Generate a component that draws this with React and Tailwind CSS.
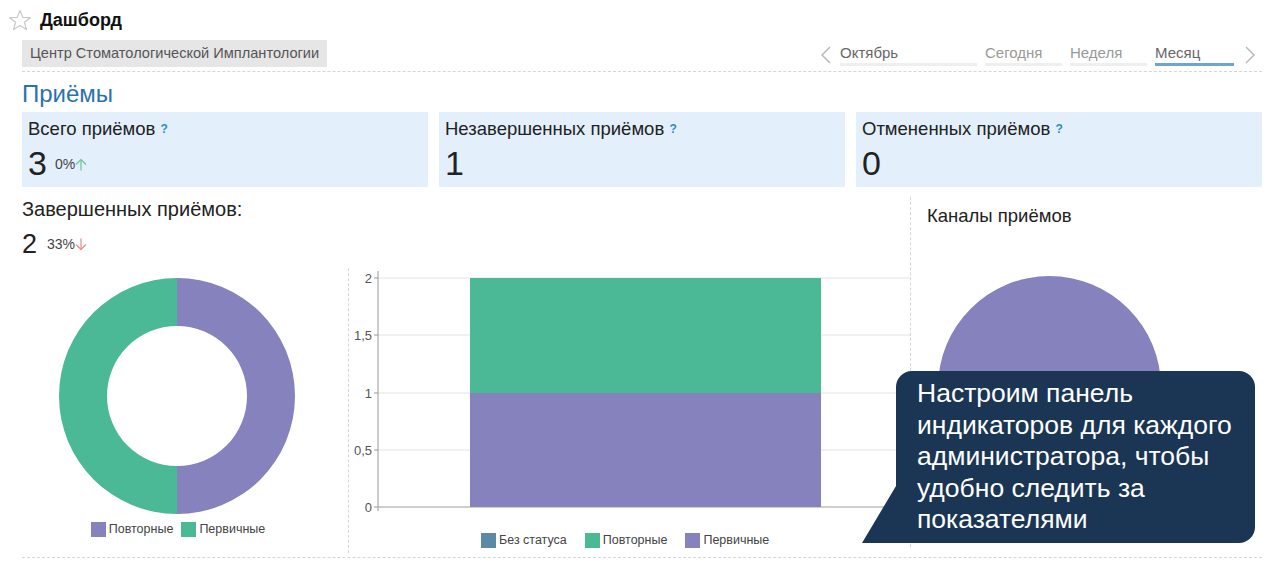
import React from 'react'

const font = { fontFamily: '"Liberation Sans", Arial, sans-serif' }

function Star() {
  return (
    <svg width="24" height="22" viewBox="0 0 24 22" className="shrink-0">
      <polygon
        points="12,1.5 14.8,8.4 22.3,8.7 16.4,13.3 18.5,20.5 12,16.4 5.5,20.5 7.6,13.3 1.7,8.7 9.2,8.4"
        fill="none"
        stroke="#c8c8c8"
        strokeWidth="1.2"
        strokeLinejoin="round"
      />
    </svg>
  )
}

function Chevron({ dir }) {
  return (
    <svg width="12" height="20" viewBox="0 0 12 20">
      <polyline
        points={dir === 'left' ? '10,2 2,10 10,18' : '2,2 10,10 2,18'}
        fill="none"
        stroke="#b5b5b5"
        strokeWidth="1.4"
      />
    </svg>
  )
}

function Arrow({ up }) {
  const c = up ? '#6cc49a' : '#e58a8a'
  return (
    <svg width="12" height="13" viewBox="0 0 12 13" className="inline-block">
      {up ? (
        <g stroke={c} strokeWidth="1.2" fill="none">
          <line x1="6" y1="1.5" x2="6" y2="12.5" />
          <polyline points="1,6.5 6,1.5 11,6.5" />
        </g>
      ) : (
        <g stroke={c} strokeWidth="1.2" fill="none">
          <line x1="6" y1="0.5" x2="6" y2="11.5" />
          <polyline points="1,6.5 6,11.5 11,6.5" />
        </g>
      )}
    </svg>
  )
}

function Stat({ title, value, delta, up }) {
  return (
    <div className="bg-[#e3f0fb] h-[75px] px-[6px] pt-[6px]">
      <div className="text-[18.5px] text-[#222] leading-[22px]">
        {title} <span className="text-[12px] text-[#2a8fc0] font-bold align-top">?</span>
      </div>
      <div className="flex items-end mt-[6px] h-[34px]">
        <span className="text-[34px] leading-[34px] text-[#222]">{value}</span>
        {delta && (
          <span className="ml-[8px] mb-[5px] text-[14px] text-[#444] flex items-center">
            {delta}
            <Arrow up={up} />
          </span>
        )}
      </div>
    </div>
  )
}

function Donut() {
  const cx = 118, cy = 118, R = 118, r = 70
  return (
    <svg width="236" height="236" viewBox="0 0 236 236">
      <path d={`M${cx},${cy - R} A${R},${R} 0 0 1 ${cx},${cy + R} L${cx},${cy + r} A${r},${r} 0 0 0 ${cx},${cy - r} Z`} fill="#8582bd" />
      <path d={`M${cx},${cy - R} A${R},${R} 0 0 0 ${cx},${cy + R} L${cx},${cy + r} A${r},${r} 0 0 1 ${cx},${cy - r} Z`} fill="#4bb896" />
    </svg>
  )
}

function BarChart() {
  const ticks = [
    ['2', 7],
    ['1,5', 64],
    ['1', 122],
    ['0,5', 179],
    ['0', 236],
  ]
  return (
    <svg width="560" height="245" viewBox="0 0 560 245">
      {ticks.map(([l, y]) => (
        <g key={l}>
          <line x1="28" x2="560" y1={y} y2={y} stroke="#e2e2e2" />
          <line x1="24" x2="28" y1={y} y2={y} stroke="#999" />
          <text x="22" y={y + 5} textAnchor="end" fontSize="13" fill="#555" style={font}>{l}</text>
        </g>
      ))}
      <line x1="28" x2="28" y1="0" y2="240" stroke="#999" />
      <line x1="28" x2="560" y1="236" y2="236" stroke="#aaa" />
      <rect x="120" y="7" width="351" height="115" fill="#4bb896" />
      <rect x="120" y="122" width="351" height="114" fill="#8582bd" />
    </svg>
  )
}

function Legend({ items, gap }) {
  return (
    <div className={`flex items-center text-[12.5px] text-[#444] ${gap}`}>
      {items.map(([c, l]) => (
        <div key={l} className="flex items-center gap-[3px]">
          <span className="w-[15px] h-[15px] inline-block" style={{ background: c }} />
          {l}
        </div>
      ))}
    </div>
  )
}

export default function App() {
  return (
    <div className="w-[1274px] h-[567px] bg-white relative overflow-hidden" style={font}>
      <div className="flex items-center gap-[8px] pl-[8px] pt-[6px] h-[34px]">
        <Star />
        <span className="text-[18px] font-bold text-[#111]">Дашборд</span>
      </div>

      <div className="ml-[22px] w-[1240px] flex items-start justify-between border-b border-dashed border-[#d6d6d6] pb-[4px] pt-[6px]">
        <div className="bg-[#e6e6e6] h-[27px] px-[8px] flex items-center text-[14.6px] text-[#555]">
          Центр Стоматологической Имплантологии
        </div>
        <div className="flex items-center text-[15px] leading-[17px] text-[#666] mr-[6px] mt-[4px]">
          <Chevron dir="left" />
          <div className="ml-[8px] w-[137px] border-b-[3px] border-[#efefef] pb-[2px]">Октябрь</div>
          <div className="ml-[8px] w-[77px] border-b-[3px] border-[#efefef] pb-[2px] text-[#999]">Сегодня</div>
          <div className="ml-[8px] w-[77px] border-b-[3px] border-[#efefef] pb-[2px] text-[#999]">Неделя</div>
          <div className="ml-[8px] w-[79px] border-b-[3px] border-[#6aa6cf] pb-[2px]">Месяц</div>
          <span className="ml-[10px]"><Chevron dir="right" /></span>
        </div>
      </div>

      <div className="ml-[22px] w-[1240px]">
        <div className="text-[24px] text-[#2a72ad] h-[40px] flex items-center pt-[4px]">Приёмы</div>
        <div className="grid grid-cols-3 gap-[11px]">
          <Stat title="Всего приёмов" value="3" delta="0%" up />
          <Stat title="Незавершенных приёмов" value="1" />
          <Stat title="Отмененных приёмов" value="0" />
        </div>

        <div className="flex border-b border-dashed border-[#d6d6d6] h-[371px]">
          <div className="w-[888px] flex flex-col">
            <div className="text-[20px] text-[#222] mt-[7px]">Завершенных приёмов:</div>
            <div className="flex items-end mt-[6px]">
              <span className="text-[27px] leading-[28px] text-[#222]">2</span>
              <span className="ml-[10px] mb-[3px] text-[14px] text-[#444] flex items-center">
                33%<Arrow />
              </span>
            </div>
            <div className="flex mt-[4px]">
              <div className="w-[326px] flex flex-col items-center pt-[16px]">
                <div className="mr-[16px]"><Donut /></div>
                <div className="mt-[6px] mr-[14px]">
                  <Legend gap="gap-[8px]" items={[['#8582bd', 'Повторные'], ['#4bb896', 'Первичные']]} />
                </div>
              </div>
              <div className="border-l border-dashed border-[#d6d6d6] h-[285px] mt-[6px] pl-[1px] pt-[3px]">
                <BarChart />
                <div className="mt-[15px] pl-[131px]">
                  <Legend gap="gap-[18px]" items={[['#5b8aa6', 'Без статуса'], ['#4bb896', 'Повторные'], ['#8582bd', 'Первичные']]} />
                </div>
              </div>
            </div>
          </div>
          <div className="border-l border-dashed border-[#d6d6d6] mt-[10px] mb-[10px] flex-1 pl-[16px]">
            <div className="text-[18.5px] text-[#222] mt-[5px]">Каналы приёмов</div>
            <div className="mt-[46px] ml-[11px] w-[223px] h-[223px] rounded-full bg-[#8582bd]" />
          </div>
        </div>
      </div>

      <div className="absolute left-[862px] top-[371px] w-[394px] h-[173px]">
        <svg className="absolute left-0 top-0" width="60" height="173" viewBox="0 0 60 173">
          <polygon points="0,172 34,115 60,115 60,172" fill="#1b3554" />
        </svg>
        <div className="absolute left-[34px] top-0 w-[359px] h-[172px] bg-[#1b3554] rounded-[16px] rounded-bl-none pl-[21px] pt-[7px] text-white text-[26.5px] leading-[31.6px]">
          Настроим панель<br />
          индикаторов для каждого<br />
          администратора, чтобы<br />
          удобно следить за<br />
          показателями
        </div>
      </div>
    </div>
  )
}
